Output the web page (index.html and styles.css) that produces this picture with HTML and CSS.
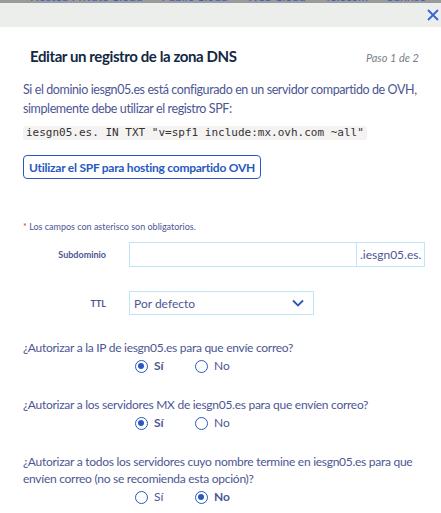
FILE: index.html
```html
<!DOCTYPE html>
<html lang="es">
<head>
<meta charset="utf-8">
<link rel="stylesheet" href="styles.css">
</head>
<body>
<div class="topnav">
  <span>Hosted Private Cloud</span>
  <span>Public Cloud</span>
  <span>Web Cloud</span>
  <span>Telecom</span>
  <span>Sunrise</span>
</div>
<div class="modal-head">
  <svg class="close" width="12" height="12" viewBox="0 0 12 12"><path d="M1 1 L11 11 M11 1 L1 11" stroke="#3563d9" stroke-width="1.8" fill="none"/></svg>
</div>
<div class="modal-body">
  <div class="title-row">
    <h1 class="title">Editar un registro de la zona DNS</h1>
    <span class="step">Paso 1 de 2</span>
  </div>
  <p class="intro">Si el dominio iesgn05.es está configurado en un servidor compartido de OVH, simplemente debe utilizar el registro SPF:</p>
  <code class="code">iesgn05.es. IN TXT "v=spf1 include:mx.ovh.com ~all"</code>
  <button class="btn">Utilizar el SPF para hosting compartido OVH</button>
  <p class="required"><span class="star">*</span> Los campos con asterisco son obligatorios.</p>
  <div class="field">
    <label class="label">Subdominio</label>
    <div class="input-group">
      <div class="input"></div>
      <div class="addon">.iesgn05.es.</div>
    </div>
  </div>
  <div class="field field-ttl">
    <label class="label">TTL</label>
    <div class="select">
      <span>Por defecto</span>
      <svg width="12" height="8" viewBox="0 0 12 8"><path d="M1 1.5 L6 6.5 L11 1.5" stroke="#2859c0" stroke-width="1.8" fill="none"/></svg>
    </div>
  </div>
  <div class="question">
    <p class="q">¿Autorizar a la IP de iesgn05.es para que envíe correo?</p>
    <div class="radios">
      <span class="radio on"><i></i><b>Sí</b></span>
      <span class="radio"><i></i>No</span>
    </div>
  </div>
  <div class="question">
    <p class="q">¿Autorizar a los servidores MX de iesgn05.es para que envíen correo?</p>
    <div class="radios">
      <span class="radio on"><i></i><b>Sí</b></span>
      <span class="radio"><i></i>No</span>
    </div>
  </div>
  <div class="question">
    <p class="q">¿Autorizar a todos los servidores cuyo nombre termine en iesgn05.es para que envíen correo (no se recomienda esta opción)?</p>
    <div class="radios">
      <span class="radio"><i></i>Sí</span>
      <span class="radio on"><i></i><b>No</b></span>
    </div>
  </div>
</div>
</body>
</html>
```
FILE: styles.css
```css
* { box-sizing: border-box; }
html, body { margin: 0; padding: 0; background: #fff; }
body {
  width: 441px;
  height: 513px;
  overflow: hidden;
  font-family: Lato, "Open Sans", sans-serif;
  color: #4d5693;
}
.topnav {
  height: 3px;
  background: #9a9a9a;
  overflow: hidden;
  display: flex;
  gap: 19px;
  padding-left: 30px;
  font-size: 12px;
  line-height: 12px;
  color: #3a5fc8;
}
.topnav span { margin-top: -9px; white-space: nowrap; }
.modal-head {
  height: 24px;
  background: #eceeec;
  display: flex;
  justify-content: flex-end;
  align-items: center;
  padding-right: 2px;
}
.close { display: block; }
.modal-body { padding: 0 4px 0 23px; }
.title-row {
  display: flex;
  justify-content: space-between;
  align-items: baseline;
  padding: 20px 18px 0 7px;
}
.title {
  margin: 0;
  font-size: 15px;
  font-weight: 700;
  letter-spacing: -0.4px;
  color: #122844;
}
.step {
  font-size: 11px;
  font-style: italic;
  color: #7a7f86;
}
.intro {
  margin: 15px 0 0;
  font-size: 12.5px;
  letter-spacing: -0.4px;
  line-height: 19px;
}
.code {
  display: inline-block;
  margin-top: 8px;
  font-family: "DejaVu Sans Mono", monospace;
  font-size: 11px;
  line-height: 14px;
  color: #333;
  background: #f5f2f2;
  border-radius: 3px;
  padding: 0 3px;
}
.btn {
  display: block;
  margin-top: 15px;
  height: 24px;
  padding: 0 5px;
  border: 1px solid #2859c0;
  border-radius: 4px;
  background: #fff;
  color: #2859c0;
  font-family: inherit;
  font-size: 12px;
  font-weight: 700;
  letter-spacing: -0.25px;
}
.required {
  margin: 42px 0 0;
  font-size: 9px;
  color: #4d5693;
}
.star { color: #d9382b; }
.field {
  display: flex;
  align-items: center;
  margin-top: 10px;
}
.field-ttl { margin-top: 24px; }
.label {
  width: 83px;
  text-align: right;
  font-size: 9px;
  font-weight: 700;
  color: #4d5693;
  margin-right: 23px;
}
.input-group { display: flex; height: 25px; }
.input {
  width: 228px;
  border: 1px solid #bfe6f8;
}
.addon {
  border: 1px solid #bfe6f8;
  border-left: 0;
  padding: 0 3px;
  display: flex;
  align-items: center;
  font-size: 12px;
}
.select {
  width: 185px;
  height: 24px;
  border: 1px solid #bfe6f8;
  display: flex;
  align-items: center;
  justify-content: space-between;
  padding: 0 9px 0 4px;
  font-size: 12px;
}
.select svg { display: block; }
.question { margin-top: 21px; }
.field-ttl + .question { margin-top: 24px; }
.q {
  margin: 0;
  font-size: 12px;
  letter-spacing: -0.27px;
  line-height: 17px;
}
.radios {
  display: flex;
  gap: 23px;
  padding-left: 112px;
  margin-top: 1px;
  font-size: 12px;
  line-height: 18px;
}
.radio {
  display: flex;
  align-items: center;
  gap: 6px;
  width: 37px;
}
.radio i {
  width: 13px;
  height: 13px;
  border: 1.5px solid #2859c0;
  border-radius: 50%;
  background: #fff;
  position: relative;
}
.radio.on i::after {
  content: "";
  position: absolute;
  left: 2px; top: 2px;
  width: 6px; height: 6px;
  border-radius: 50%;
  background: #2859c0;
}
.radio b { font-weight: 700; }
```
